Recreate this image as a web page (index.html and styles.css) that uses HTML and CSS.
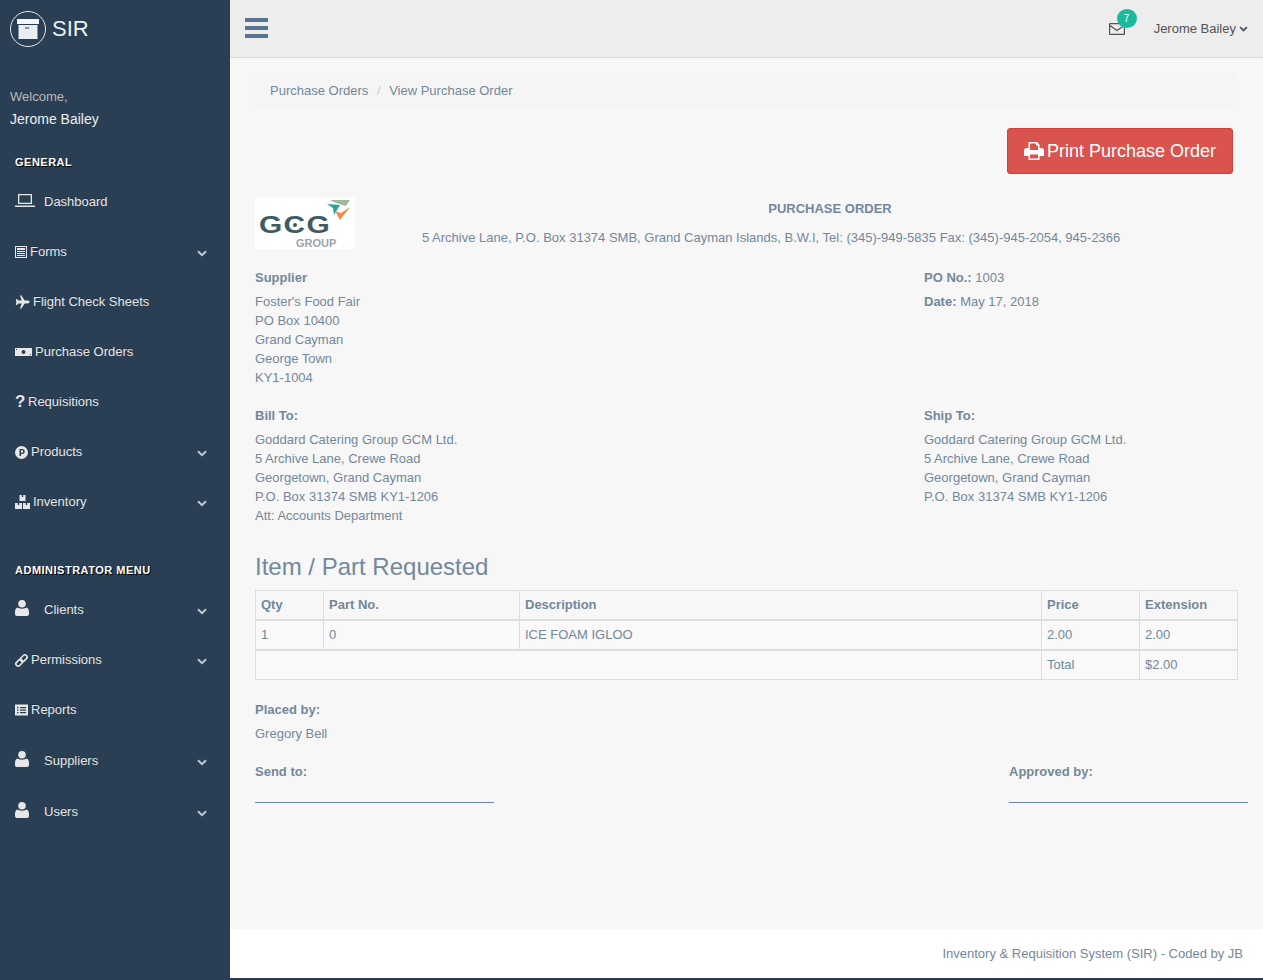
FILE: index.html
```html
<!DOCTYPE html>
<html lang="en">

<head>
    <meta charset="UTF-8">
    <title>View Purchase Order</title>
    <link rel="stylesheet" href="styles.css">
</head>

<body>
    <div class="container">
        <!-- sidebar -->
        <div class="sidebar">
            <div class="brand">
                <span class="brand-circle">
                    <svg width="22" height="20" viewBox="0 0 22 20">
                        <rect x="0" y="0" width="22" height="5" fill="#f2f6f9" />
                        <rect x="1.500" y="6" width="19" height="14" fill="#e9edf1" />
                        <rect x="8" y="8.500" width="4" height="1" fill="#2a3f54" />
                    </svg>
                </span>
                <span class="brand-name">SIR</span>
            </div>
            <div class="profile">
                <span class="welcome">Welcome,</span>
                <span class="profile-name">Jerome Bailey</span>
            </div>

            <h3 class="menu-title">General</h3>
            <ul class="menu">
                <li>
                    <svg class="ico ico-wide" viewBox="0 0 20 14"><path fill="#e7e7e7" d="M3 0h14v10H3zM4.300 1.300v7.400h11.400V1.300zM0 11.500h20V13H0z" fill-rule="evenodd" /></svg>
                    <span class="gap-label">Dashboard</span>
                </li>
                <li>
                    <svg class="ico" width="12" height="12" viewBox="0 0 12 12"><path fill="#e7e7e7" fill-rule="evenodd" d="M0 0h12v12H0zM1 1v10h10V1zM2 2h8v2H2zM2 5h8v1H2zM2 7h8v1H2zM2 9h8v1H2z" /></svg>
                    <span>Forms</span>
                    <svg class="chev" viewBox="0 0 10 7"><path d="M1 1.200 5 5.200 9 1.200" /></svg>
                </li>
                <li>
                    <svg class="ico" width="15" height="14" viewBox="0 0 16 14"><path fill="#e7e7e7" d="M15.600 7c0-.9-1.300-1.500-2.300-1.500h-3L6.800 0H5.300l1.900 5.500H3.500L2 3.700H.8L1.500 7 .8 10.300H2l1.500-1.800h3.700L5.300 14h1.500l3.500-5.500h3c1 0 2.300-.6 2.300-1.500z" /></svg>
                    <span>Flight Check Sheets</span>
                </li>
                <li>
                    <svg class="ico" width="17" height="8" viewBox="0 0 17 8"><path fill="#e7e7e7" fill-rule="evenodd" d="M0 0h17v8H0zM8.500 2a2 2 0 1 0 0 4 2 2 0 0 0 0-4zM1 1v1h1V1zM15 6v1h1V6z" /></svg>
                    <span>Purchase Orders</span>
                </li>
                <li>
                    <span class="ico ico-q">?</span>
                    <span>Requisitions</span>
                </li>
                <li>
                    <svg class="ico" width="13" height="13" viewBox="0 0 13 13"><path fill="#e7e7e7" fill-rule="evenodd" d="M6.500 0a6.500 6.500 0 1 1 0 13 6.500 6.500 0 0 1 0-13zM4.500 3v7H6V8h1.200a2.500 2.500 0 0 0 0-5zM6 4.300h1a1.200 1.200 0 0 1 0 2.400H6z" /></svg>
                    <span>Products</span>
                    <svg class="chev" viewBox="0 0 10 7"><path d="M1 1.200 5 5.200 9 1.200" /></svg>
                </li>
                <li>
                    <svg class="ico" width="15" height="14" viewBox="0 0 15 14"><path fill="#e7e7e7" d="M4.500 0h6v6h-6zM0 8h7v6H0zM8 8h7v6H8z" /><path fill="#2a3f54" d="M6.800 0h1.400v2H6.800zM2.800 8h1.400v2H2.800zM10.800 8h1.400v2h-1.400z" /></svg>
                    <span>Inventory</span>
                    <svg class="chev" viewBox="0 0 10 7"><path d="M1 1.200 5 5.200 9 1.200" /></svg>
                </li>
            </ul>

            <h3 class="menu-title admin">Administrator Menu</h3>
            <ul class="menu">
                <li>
                    <svg class="ico ico-user" viewBox="0 0 14 16"><path fill="#e7e7e7" d="M7 0a3.800 3.800 0 1 1 0 7.600A3.800 3.800 0 0 1 7 0zM2.500 7.500C4 9 10 9 11.500 7.500 13 8 14 9.500 14 12v2c0 1-.8 2-2 2H2c-1.200 0-2-1-2-2v-2c0-2.500 1-4 2.500-4.500z" /></svg>
                    <span class="gap-label">Clients</span>
                    <svg class="chev" viewBox="0 0 10 7"><path d="M1 1.200 5 5.200 9 1.200" /></svg>
                </li>
                <li>
                    <svg class="ico" width="13" height="13" viewBox="0 0 13 13"><g transform="rotate(-45 6.500 6.500)" fill="none" stroke="#e7e7e7" stroke-width="1.600"><rect x="-.5" y="4.300" width="7.500" height="4.400" rx="2.200" /><rect x="6" y="4.300" width="7.500" height="4.400" rx="2.200" /></g></svg>
                    <span>Permissions</span>
                    <svg class="chev" viewBox="0 0 10 7"><path d="M1 1.200 5 5.200 9 1.200" /></svg>
                </li>
                <li>
                    <svg class="ico" width="13" height="12" viewBox="0 0 13 11"><path fill="#e7e7e7" fill-rule="evenodd" d="M0 0h13v11H0zM2 2.500v1.200h1.500V2.500zM5 2.500v1.200h6V2.500zM2 5v1.200h1.500V5zM5 5v1.200h6V5zM2 7.500v1.200h1.500V7.500zM5 7.500v1.200h6V7.500z" /></svg>
                    <span>Reports</span>
                </li>
                <li class="tall">
                    <svg class="ico ico-user" viewBox="0 0 14 16"><path fill="#e7e7e7" d="M7 0a3.800 3.800 0 1 1 0 7.600A3.800 3.800 0 0 1 7 0zM2.500 7.500C4 9 10 9 11.500 7.500 13 8 14 9.500 14 12v2c0 1-.8 2-2 2H2c-1.200 0-2-1-2-2v-2c0-2.500 1-4 2.500-4.500z" /></svg>
                    <span class="gap-label">Suppliers</span>
                    <svg class="chev" viewBox="0 0 10 7"><path d="M1 1.200 5 5.200 9 1.200" /></svg>
                </li>
                <li class="tall">
                    <svg class="ico ico-user" viewBox="0 0 14 16"><path fill="#e7e7e7" d="M7 0a3.800 3.800 0 1 1 0 7.600A3.800 3.800 0 0 1 7 0zM2.500 7.500C4 9 10 9 11.500 7.500 13 8 14 9.500 14 12v2c0 1-.8 2-2 2H2c-1.200 0-2-1-2-2v-2c0-2.500 1-4 2.500-4.500z" /></svg>
                    <span class="gap-label">Users</span>
                    <svg class="chev" viewBox="0 0 10 7"><path d="M1 1.200 5 5.200 9 1.200" /></svg>
                </li>
            </ul>
        </div>

        <div class="main">
            <!-- top bar -->
            <div class="topnav">
                <div class="burger"><span></span><span></span><span></span></div>
                <div class="top-right">
                    <div class="mail">
                        <svg width="16" height="12" viewBox="0 0 16 12"><path fill="none" stroke="#515356" stroke-width="1.200" d="M1.100.6h13.800c.3 0 .5.200.5.500v9.800c0 .3-.2.500-.5.500H1.100c-.3 0-.5-.2-.5-.5V1.100c0-.3.200-.5.500-.5zM.8 2.600 8 7.500l7.200-4.900" /></svg>
                        <span class="badge">7</span>
                    </div>
                    <span class="top-user">Jerome Bailey</span>
                    <svg class="top-chev" viewBox="0 0 10 7"><path d="M1 1.200 5 5.200 9 1.200" /></svg>
                </div>
            </div>

            <!-- page -->
            <div class="content">
                <div class="breadcrumb">
                    <span>Purchase Orders</span>
                    <span class="sep">/</span>
                    <span>View Purchase Order</span>
                </div>

                <div class="print-row">
                    <button class="btn-print">
                        <svg width="20" height="18" viewBox="0 0 20 18"><path fill="#fff" fill-rule="evenodd" d="M4.500 0h8.500l2.500 2.500V6h1.500C18.800 6 20 7.200 20 8.500V14h-4.500v4h-11v-4H0V8.500C0 7.200 1.200 6 2.500 6h2zM6 1.500V8h8V3.500h-2V1.500zM6 12.500v4h8v-4z" /></svg>
                        Print Purchase Order
                    </button>
                </div>

                <div class="po-head">
                    <div class="logo">
                        <span class="logo-gcg">GCG</span>
                        <span class="logo-dot"></span>
                        <span class="logo-group">GROUP</span>
                        <svg class="logo-arrows" width="24" height="20" viewBox="0 0 24 20">
                            <path fill="#9db99a" d="M3 0h20l-4 6-10-3z" />
                            <path fill="#2aa3a0" d="M0 4l13 1-6 10-1-7z" />
                            <path fill="#ee8a4a" d="M23 7 13 20 8 11l6 2z" />
                        </svg>
                    </div>
                    <div class="po-title">
                        <h4>PURCHASE ORDER</h4>
                        <p>5 Archive Lane, P.O. Box 31374 SMB, Grand Cayman Islands, B.W.I, Tel: (345)-949-5835 Fax: (345)-945-2054, 945-2366</p>
                    </div>
                </div>

                <div class="addr-row">
                    <div class="addr">
                        <p class="addr-label">Supplier</p>
                        <p>Foster's Food Fair</p>
                        <p>PO Box 10400</p>
                        <p>Grand Cayman</p>
                        <p>George Town</p>
                        <p>KY1-1004</p>
                    </div>
                    <div class="addr">
                        <p class="po-line"><b>PO No.:</b> 1003</p>
                        <p class="po-line"><b>Date:</b> May 17, 2018</p>
                    </div>
                </div>

                <div class="addr-row">
                    <div class="addr">
                        <p class="addr-label">Bill To:</p>
                        <p>Goddard Catering Group GCM Ltd.</p>
                        <p>5 Archive Lane, Crewe Road</p>
                        <p>Georgetown, Grand Cayman</p>
                        <p>P.O. Box 31374 SMB KY1-1206</p>
                        <p>Att: Accounts Department</p>
                    </div>
                    <div class="addr">
                        <p class="addr-label">Ship To:</p>
                        <p>Goddard Catering Group GCM Ltd.</p>
                        <p>5 Archive Lane, Crewe Road</p>
                        <p>Georgetown, Grand Cayman</p>
                        <p>P.O. Box 31374 SMB KY1-1206</p>
                    </div>
                </div>

                <h2 class="items-title">Item / Part Requested</h2>
                <table class="items">
                    <thead>
                        <tr>
                            <th class="c-qty">Qty</th>
                            <th class="c-part">Part No.</th>
                            <th>Description</th>
                            <th class="c-price">Price</th>
                            <th class="c-ext">Extension</th>
                        </tr>
                    </thead>
                    <tbody>
                        <tr>
                            <td>1</td>
                            <td>0</td>
                            <td>ICE FOAM IGLOO</td>
                            <td>2.00</td>
                            <td>2.00</td>
                        </tr>
                        <tr class="total">
                            <td colspan="3"></td>
                            <td>Total</td>
                            <td>$2.00</td>
                        </tr>
                    </tbody>
                </table>

                <p class="placed-label">Placed by:</p>
                <p class="placed-name">Gregory Bell</p>

                <div class="sign-row">
                    <div class="sign">Send to:</div>
                    <div class="sign">Approved by:</div>
                </div>
            </div>

            <div class="footer">Inventory &amp; Requisition System (SIR) - Coded by JB</div>
        </div>
    </div>
</body>

</html>
```

FILE: styles.css
```css
* {
    margin: 0;
    padding: 0;
    box-sizing: border-box;
}

html,
body {
    height: 100%;
    overflow: hidden;
}

body {
    background-color: #2a3f54;
    font-family: "Liberation Sans", Arial, sans-serif;
    font-size: 13px;
    line-height: 20px;
    color: #73879c;
}

ul {
    list-style: none;
}

.container {
    display: flex;
    height: 978px;
}

/* sidebar */
.sidebar {
    width: 230px;
    flex: none;
    color: #ecf0f1;
}

.brand {
    display: flex;
    align-items: center;
    height: 57px;
    padding-left: 10px;
}

.brand-circle {
    display: flex;
    align-items: center;
    justify-content: center;
    width: 36px;
    height: 36px;
    border: 1px solid #e7e7e7;
    border-radius: 50%;
}

.brand-name {
    margin-left: 6px;
    font-size: 22px;
    color: #ecf0f1;
}

.profile {
    padding: 30px 10px 0;
}

.welcome {
    display: block;
    color: #bab8b8;
    line-height: 20px;
}

.profile-name {
    display: block;
    margin-top: 1px;
    font-size: 14px;
    line-height: 22px;
    color: #ecf0f1;
}

.menu-title {
    padding-left: 15px;
    margin-top: 25px;
    font-size: 11px;
    line-height: 14px;
    letter-spacing: 0.5px;
    font-weight: bold;
    text-transform: uppercase;
    color: #fff;
    text-shadow: 1px 1px #000;
}

.menu-title.admin {
    margin-top: 36px;
}

.menu {
    margin-top: 8px;
}

.menu li {
    display: flex;
    align-items: center;
    height: 50px;
    padding: 0 23px 0 15px;
    color: #e7e7e7;
    text-shadow: rgba(0, 0, 0, 0.25) 0 -1px 0;
}

.menu li.tall {
    height: 51px;
}

.ico {
    flex: none;
    margin-right: 3px;
    overflow: visible;
}

.ico-wide {
    width: 20px;
    height: 14px;
    margin-top: -3px;
}

.ico-user {
    width: 14px;
    height: 16px;
    margin-top: -4px;
}

.ico-q {
    width: 10px;
    font-size: 17px;
    font-weight: bold;
    text-align: center;
    color: #e7e7e7;
}

.gap-label {
    margin-left: 6px;
}

.ico-user + .gap-label {
    margin-left: 12px;
}

.chev {
    width: 10px;
    height: 7px;
    margin-left: auto;
    margin-top: 3px;
    fill: none;
    stroke: #c3c9cf;
    stroke-width: 2;
}

/* top bar */
.main {
    flex: 1;
    min-width: 0;
    display: flex;
    flex-direction: column;
    background-color: #f7f7f7;
}

.topnav {
    display: flex;
    align-items: center;
    justify-content: space-between;
    flex: none;
    height: 58px;
    padding: 0 15px;
    background-color: #ededed;
    border-bottom: 1px solid #d9dee4;
}

.burger {
    display: flex;
    flex-direction: column;
    gap: 4px;
    width: 23px;
    margin-bottom: 1px;
}

.burger span {
    display: block;
    height: 4px;
    background-color: #5a738e;
}

.top-right {
    display: flex;
    align-items: center;
    margin-top: 1px;
}

.mail {
    position: relative;
    display: flex;
    margin-right: 29px;
}

.badge {
    position: absolute;
    top: -14px;
    left: 8px;
    width: 20px;
    height: 19px;
    border-radius: 50%;
    background-color: #1abb9c;
    color: #fff;
    font-size: 10px;
    line-height: 19px;
    text-align: center;
}

.top-user {
    color: #515356;
}

.top-chev {
    width: 9px;
    height: 6px;
    margin-left: 3px;
    fill: none;
    stroke: #515356;
    stroke-width: 2;
}

/* page */
.content {
    flex: 1;
    padding: 14px 25px 0;
}

.breadcrumb {
    height: 37px;
    padding: 9px 15px 0;
    border-radius: 4px;
    background-color: #f5f5f5;
}

.sep {
    padding: 0 5px;
    color: #ccc;
}

.print-row {
    display: flex;
    justify-content: flex-end;
    margin-top: 19px;
    padding-right: 5px;
}

.btn-print {
    display: flex;
    align-items: center;
    gap: 3px;
    height: 46px;
    padding: 0 16px;
    border: 1px solid #d43f3a;
    border-radius: 3px;
    background-color: #d9534f;
    color: #fff;
    font-family: inherit;
    font-size: 18px;
}

.po-head {
    display: flex;
    margin-top: 24px;
}

.logo {
    position: relative;
    flex: none;
    width: 100px;
    height: 51px;
    background-color: #fff;
}

.logo-gcg {
    position: absolute;
    left: 4px;
    top: 12px;
    font-size: 23px;
    line-height: 30px;
    font-weight: bold;
    letter-spacing: 1px;
    color: #3f5b63;
    transform: scaleX(1.3);
    transform-origin: left center;
}

.logo-dot {
    position: absolute;
    left: 38px;
    top: 25px;
    width: 4px;
    height: 4px;
    border-radius: 50%;
    background-color: #3f5b63;
}

.logo-group {
    position: absolute;
    left: 41px;
    top: 39px;
    font-size: 11px;
    line-height: 12px;
    font-weight: bold;
    color: #9aa5a8;
}

.logo-arrows {
    position: absolute;
    left: 72px;
    top: 2px;
}

.po-title {
    flex: 1;
    min-width: 0;
    padding-left: 67px;
}

.po-title h4 {
    padding-top: 2px;
    font-size: 13px;
    line-height: 18px;
    text-align: center;
}

.po-title p {
    margin-top: 10px;
    white-space: nowrap;
}

.addr-row {
    display: flex;
    margin-top: 19px;
}

.addr {
    width: 669px;
    flex: none;
}

.addr:last-child {
    width: 314px;
}

.addr p {
    line-height: 19px;
}

.addr p.addr-label {
    font-weight: bold;
    line-height: 20px;
    margin-bottom: 4px;
}

.addr p.po-line {
    line-height: 20px;
    margin-bottom: 4px;
}

.items-title {
    margin-top: 28px;
    font-size: 24px;
    font-weight: normal;
    line-height: 28px;
}

.items {
    width: 100%;
    margin-top: 9px;
    border-collapse: collapse;
}

.items tbody {
    background-color: #f9f9f9;
}

.items th,
.items td {
    height: 30px;
    padding: 0 5px;
    border: 1px solid #ddd;
    text-align: left;
}

.items th {
    height: 29px;
}

.items th,
.items tbody tr:first-child td {
    border-bottom-width: 2px;
}

.c-qty {
    width: 68px;
}

.c-part {
    width: 196px;
}

.c-price {
    width: 98px;
}

.c-ext {
    width: 98px;
}

.placed-label {
    margin-top: 20px;
    font-weight: bold;
}

.placed-name {
    margin-top: 4px;
}

.sign-row {
    display: flex;
    justify-content: space-between;
    margin-top: 18px;
    margin-right: -10px;
}

.sign {
    width: 239px;
    height: 41px;
    font-weight: bold;
    border-bottom: 1px solid #6b87a5;
}

/* footer */
.footer {
    flex: none;
    height: 49px;
    padding: 15px 20px 0;
    background-color: #fff;
    text-align: right;
}
```
